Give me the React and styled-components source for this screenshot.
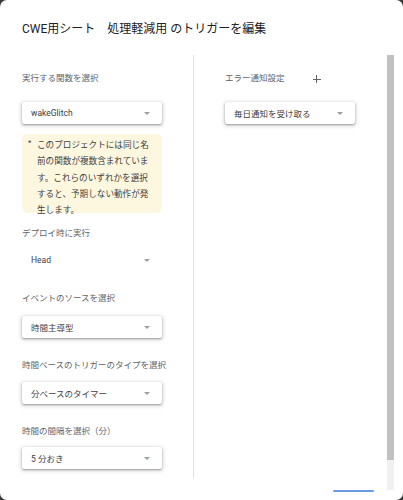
import React from 'react';
import styled, { createGlobalStyle } from 'styled-components';

const GlobalStyle = createGlobalStyle`
  html, body {
    margin: 0;
    padding: 0;
    background: #3a3a3a;
  }
  body {
    font-family: Roboto, "Noto Sans CJK JP", sans-serif;
  }
`;

const Dialog = styled.div`
  width: 403px;
  height: 500px;
  background: #fff;
  border-radius: 7px;
  overflow: hidden;
  display: flex;
  flex-direction: column;
`;

const Header = styled.h2`
  margin: 0;
  padding: 22px 22px 19px;
  height: 14px;
  font-size: 12px;
  line-height: 14px;
  font-weight: 400;
  color: #202124;
  white-space: pre;
`;

const Body = styled.div`
  display: flex;
  height: 435px;
`;

const Columns = styled.div`
  flex: 1;
  display: flex;
  margin-bottom: 12px;
`;

const Column = styled.div`
  display: flex;
  flex-direction: column;
  align-items: flex-start;
  padding: 17px 0 0 ${p => p.$left}px;
  width: ${p => p.$width ? `${p.$width}px` : 'auto'};
  flex: ${p => p.$width ? 'none' : 1};
  border-right: ${p => p.$divider ? '1px solid #e0e0e0' : 'none'};
  box-sizing: border-box;
`;

const Label = styled.div`
  font-size: 8.5px;
  line-height: 12px;
  color: #5f6368;
  margin-top: ${p => p.$top || 0}px;
  white-space: nowrap;
  display: flex;
  align-items: center;
`;

const Plus = styled.span`
  margin-left: 28px;
  width: 8px;
  height: 8px;
  position: relative;
  top: 1px;
  &::before, &::after {
    content: '';
    position: absolute;
    background: #5f6368;
  }
  &::before {
    left: 0;
    top: 3.5px;
    width: 8px;
    height: 1px;
  }
  &::after {
    left: 3.5px;
    top: 0;
    width: 1px;
    height: 8px;
  }
`;

const Select = styled.div`
  margin-top: ${p => p.$top || 0}px;
  width: ${p => p.$width}px;
  height: 22px;
  box-sizing: border-box;
  padding: 0 12px 0 9px;
  display: flex;
  align-items: center;
  justify-content: space-between;
  background: #fff;
  border-radius: 2px;
  box-shadow: ${p => p.$flat ? 'none' : '0 1px 2px rgba(0,0,0,0.3), 0 1px 4px 1px rgba(0,0,0,0.15)'};
  font-size: 8.5px;
  color: #3c4043;
  white-space: nowrap;
`;

const Arrow = styled.span`
  width: 0;
  height: 0;
  border-left: 3px solid transparent;
  border-right: 3px solid transparent;
  border-top: 3px solid #9aa0a6;
`;

const Notice = styled.div`
  margin-top: 10px;
  width: 140px;
  height: 79px;
  box-sizing: border-box;
  padding: 3px 0 0 6px;
  background: #fef7e0;
  border-radius: 5px;
  display: flex;
  font-size: 8.6px;
  line-height: 16.3px;
  color: #3c4043;
`;

const Bullet = styled.span`
  width: 9px;
  flex: none;
  font-size: 8px;
  line-height: 12px;
`;

const NoticeText = styled.p`
  margin: 0;
  white-space: nowrap;
`;

const Scrollbar = styled.div`
  width: 7px;
  margin: 0 9px 0 2px;
  background: #f1f1f1;
  display: flex;
  flex-direction: column;
`;

const Thumb = styled.div`
  height: 405px;
  background: #c1c1c1;
`;

const Footer = styled.div`
  display: flex;
  justify-content: flex-end;
  padding-right: 29px;
`;

const SaveEdge = styled.div`
  width: 41px;
  height: 2px;
  background: #6b9be3;
  border-radius: 1px;
`;

const Dropdown = ({ value, width, top, flat }) => (
  <Select $width={width} $top={top} $flat={flat}>
    <span>{value}</span>
    <Arrow />
  </Select>
);

const App = () => (
  <>
    <GlobalStyle />
    <Dialog>
      <Header>CWE用シート　処理軽減用 のトリガーを編集</Header>
      <Body>
        <Columns>
          <Column $left={22} $width={194} $divider>
            <Label>実行する関数を選択</Label>
            <Dropdown value="wakeGlitch" width={140} top={18} />
            <Notice>
              <Bullet>*</Bullet>
              <NoticeText>
                このプロジェクトには同じ名<br />
                前の関数が複数含まれていま<br />
                す。これらのいずれかを選択<br />
                すると、予期しない動作が発<br />
                生します。
              </NoticeText>
            </Notice>
            <Label $top={14}>デプロイ時に実行</Label>
            <Dropdown value="Head" width={140} top={10} flat />
            <Label $top={21}>イベントのソースを選択</Label>
            <Dropdown value="時間主導型" width={140} top={12} />
            <Label $top={21}>時間ベースのトリガーのタイプを選択</Label>
            <Dropdown value="分ベースのタイマー" width={140} top={11} />
            <Label $top={21}>時間の間隔を選択（分）</Label>
            <Dropdown value="5 分おき" width={140} top={10} />
          </Column>
          <Column $left={31}>
            <Label>エラー通知設定<Plus /></Label>
            <Dropdown value="毎日通知を受け取る" width={130} top={18} />
          </Column>
        </Columns>
        <Scrollbar>
          <Thumb />
        </Scrollbar>
      </Body>
      <Footer>
        <SaveEdge />
      </Footer>
    </Dialog>
  </>
);

export default App;
